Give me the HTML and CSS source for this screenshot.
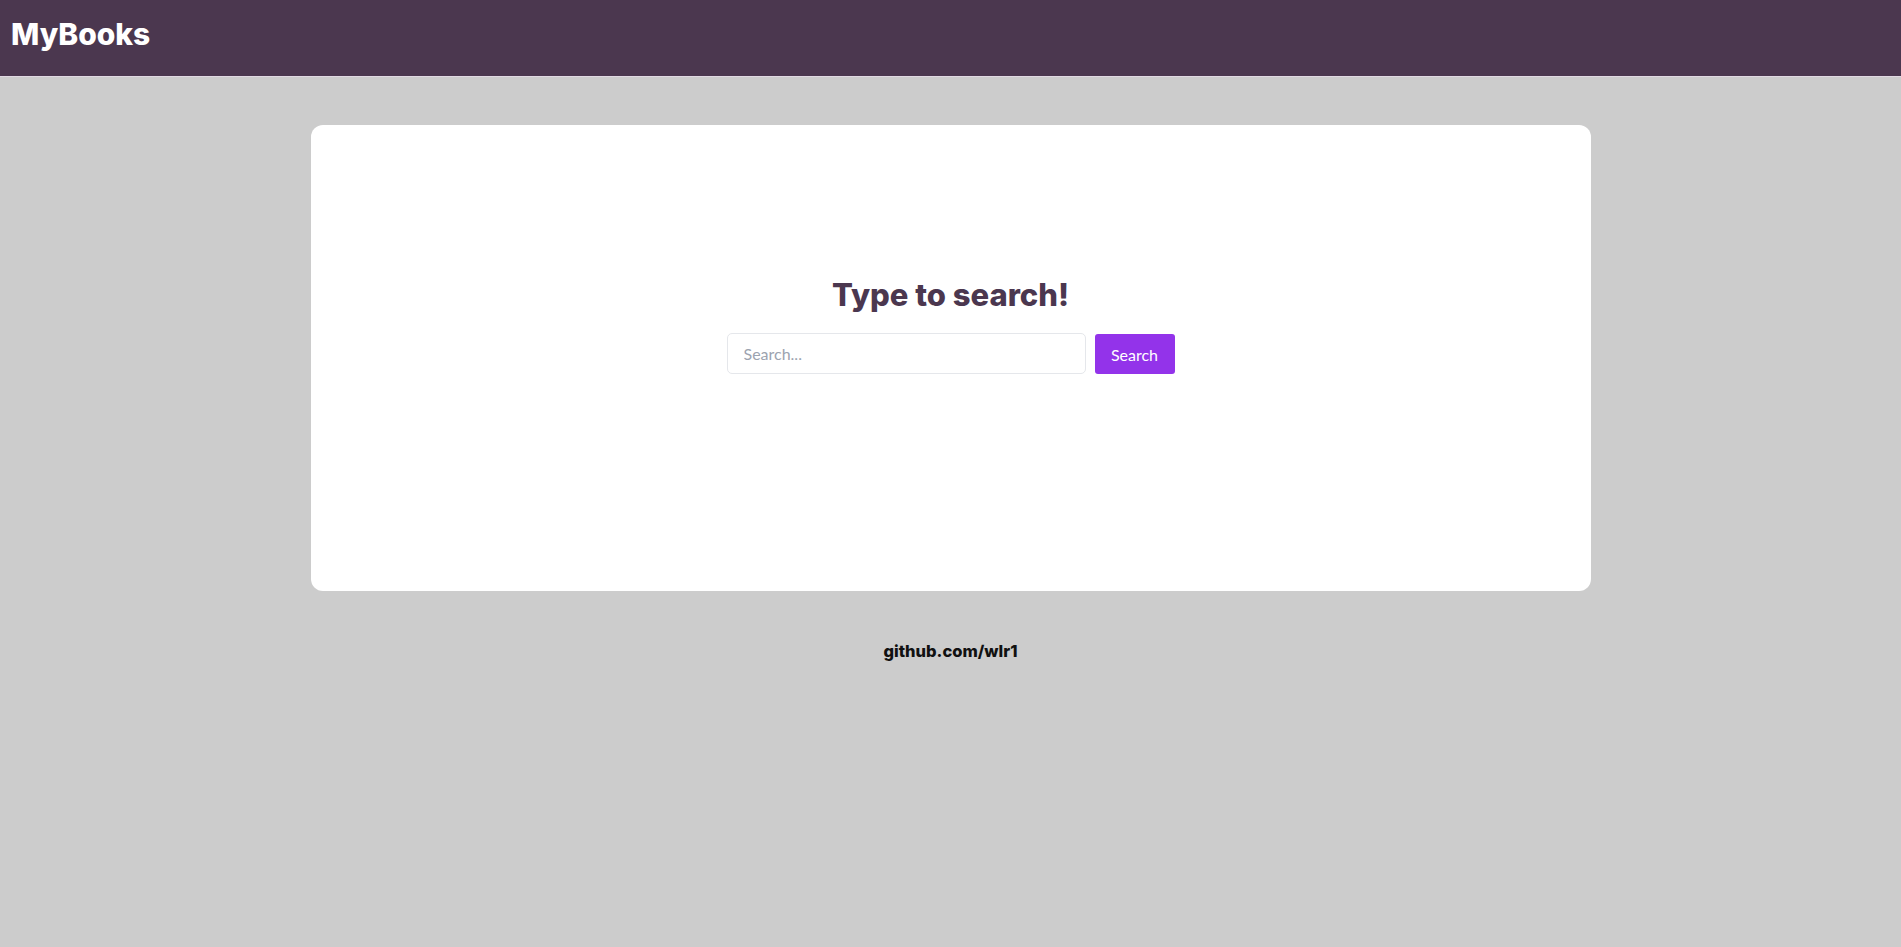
FILE: index.html
```html
<!DOCTYPE html>
<html lang="en">
<head>
<meta charset="utf-8">
<title>MyBooks</title>
<link rel="stylesheet" href="styles.css">
</head>
<body>
<header class="topbar">
  <h1 class="brand">MyBooks</h1>
</header>
<main class="main">
  <section class="card">
    <h2 class="title">Type to search!</h2>
    <form class="search">
      <input class="search-input" type="text" placeholder="Search...">
      <button class="search-btn" type="button">Search</button>
    </form>
  </section>
  <footer class="footer">github.com/wlr1</footer>
</main>
</body>
</html>
```
FILE: styles.css
```css
* { box-sizing: border-box; }
html, body { margin: 0; padding: 0; }
body {
  background: #cccccc;
  font-family: "Lato", "Liberation Sans", sans-serif;
  min-height: 100vh;
}
.topbar {
  height: 77px;
  background: #4b374f;
  border-bottom: 1px solid #e0d8e2;
  display: flex;
  align-items: center;
  padding-left: 11px;
  padding-bottom: 9px;
}
.brand {
  margin: 0;
  color: #ffffff;
  font-family: "Inter", "Open Sans", sans-serif;
  font-weight: 800;
  font-size: 30px;
  letter-spacing: 0;
}
.main {
  display: flex;
  flex-direction: column;
  align-items: center;
  padding-top: 48px;
}
.card {
  width: 1280px;
  height: 466px;
  background: #ffffff;
  border-radius: 12px;
  display: flex;
  flex-direction: column;
  align-items: center;
  padding-top: 148px;
}
.title {
  margin: 0;
  color: #4b374f;
  font-family: "Inter", "Open Sans", sans-serif;
  font-weight: 800;
  font-size: 31px;
  line-height: 44px;
}
.search {
  display: flex;
  gap: 9px;
  margin-top: 16px;
}
.search-input {
  width: 359px;
  height: 41px;
  border: 1px solid #e5e7eb;
  border-radius: 5px;
  padding: 0 16px;
  font-family: "Lato", sans-serif;
  font-size: 16px;
  color: #374151;
  outline: none;
}
.search-input::placeholder { color: #9ca3af; }
.search-btn {
  width: 80px;
  height: 40px;
  margin-top: 1px;
  border: none;
  border-radius: 3px;
  background: #9333ea;
  color: #ffffff;
  font-family: "Lato", sans-serif;
  font-size: 16px;
}
.footer {
  margin-top: 50px;
  font-family: "Inter", "Open Sans", sans-serif;
  font-weight: 800;
  font-size: 16.5px;
  color: #111111;
}
```
